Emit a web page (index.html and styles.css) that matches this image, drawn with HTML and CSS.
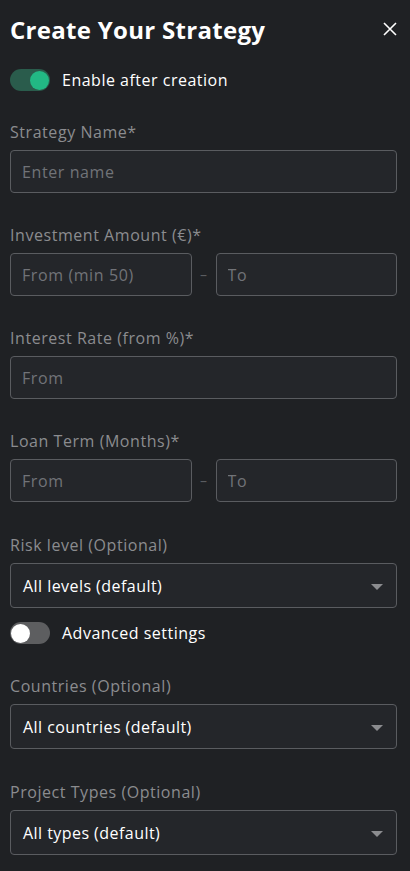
FILE: index.html
```html
<!DOCTYPE html>
<html>
<head>
  <link rel="stylesheet" href="styles.css">
</head>
<body>
  <div class="panel">
    <div class="header">
      <h1 class="title">Create Your Strategy</h1>
      <button class="close" aria-label="Close">
        <svg width="14" height="14" viewBox="0 0 14 14"><path d="M1 1L13 13M13 1L1 13" stroke="#ffffff" stroke-width="1.6" fill="none"/></svg>
      </button>
    </div>

    <label class="switch-row">
      <span class="switch on"><span class="knob"></span></span>
      <span class="switch-text">Enable after creation</span>
    </label>

    <div class="field">
      <div class="label">Strategy Name*</div>
      <input class="input" type="text" placeholder="Enter name">
    </div>

    <div class="field">
      <div class="label">Investment Amount (€)*</div>
      <div class="range">
        <input class="input" type="text" placeholder="From (min 50)">
        <span class="dash">–</span>
        <input class="input" type="text" placeholder="To">
      </div>
    </div>

    <div class="field">
      <div class="label">Interest Rate (from %)*</div>
      <input class="input" type="text" placeholder="From">
    </div>

    <div class="field">
      <div class="label">Loan Term (Months)*</div>
      <div class="range">
        <input class="input" type="text" placeholder="From">
        <span class="dash">–</span>
        <input class="input" type="text" placeholder="To">
      </div>
    </div>

    <div class="field tight">
      <div class="label">Risk level (Optional)</div>
      <div class="select">All levels (default)<span class="caret"></span></div>
    </div>

    <label class="switch-row advanced">
      <span class="switch"><span class="knob"></span></span>
      <span class="switch-text">Advanced settings</span>
    </label>

    <div class="field countries">
      <div class="label">Countries (Optional)</div>
      <div class="select">All countries (default)<span class="caret"></span></div>
    </div>

    <div class="field types">
      <div class="label">Project Types (Optional)</div>
      <div class="select">All types (default)<span class="caret"></span></div>
    </div>
  </div>
</body>
</html>
```

FILE: styles.css
```css
* {
  box-sizing: border-box;
}

body {
  margin: 0;
  background-color: #1f2124;
  font-family: "Open Sans", "Liberation Sans", sans-serif;
  color: #ffffff;
}

.panel {
  width: 397px;
  padding: 12px 0 0 10px;
}

.header {
  display: flex;
  align-items: center;
  justify-content: space-between;
  height: 34px;
}

.title {
  margin: 0;
  font-size: 24px;
  font-weight: 700;
  letter-spacing: 0.3px;
}

.close {
  background: none;
  border: none;
  padding: 0;
  width: 14px;
  height: 14px;
  cursor: pointer;
  display: flex;
}

.switch-row {
  display: flex;
  align-items: center;
  gap: 12px;
  margin-top: 23px;
  height: 22px;
}

.switch {
  position: relative;
  width: 40px;
  height: 22px;
  border-radius: 11px;
  background-color: #5d5e60;
  flex-shrink: 0;
}

.switch .knob {
  position: absolute;
  top: 2px;
  left: 1px;
  width: 19px;
  height: 19px;
  border-radius: 50%;
  background-color: #ffffff;
}

.switch.on {
  background-color: #2a5c4c;
}

.switch.on .knob {
  left: 20px;
  background-color: #22b884;
}

.switch-text {
  font-size: 16px;
  font-weight: 500;
  letter-spacing: 0.5px;
}

.field {
  margin-top: 31px;
}

.field + .field {
  margin-top: 32px;
}

.label {
  font-size: 16px;
  line-height: 20px;
  letter-spacing: 0.55px;
  color: #8b8c8f;
  margin-bottom: 8px;
}

.input {
  display: block;
  width: 100%;
  height: 43px;
  padding: 0 11px;
  background-color: #24262a;
  border: 1px solid #5a5c60;
  border-radius: 4px;
  font-family: inherit;
  font-size: 16px;
  letter-spacing: 0.6px;
  color: #ffffff;
  outline: none;
}

.input::placeholder {
  color: #717378;
}

.range {
  display: flex;
  align-items: center;
}

.range .input {
  flex: 1;
  width: auto;
  min-width: 0;
}

.dash {
  width: 24px;
  text-align: center;
  color: #5a5c60;
  font-size: 14px;
}

.field.tight {
  margin-top: 33px;
}

.select {
  position: relative;
  height: 45px;
  display: flex;
  align-items: center;
  padding: 0 12px;
  background-color: #24262a;
  border: 1px solid #5a5c60;
  border-radius: 4px;
  font-size: 16px;
  font-weight: 500;
  letter-spacing: 0.45px;
  color: #ffffff;
}

.caret {
  position: absolute;
  right: 13px;
  top: 20px;
  width: 0;
  height: 0;
  border-left: 6px solid transparent;
  border-right: 6px solid transparent;
  border-top: 6px solid #8b8c8f;
}

.advanced {
  margin-top: 14px;
}

.field.countries {
  margin-top: 32px;
}

.field.types {
  margin-top: 33px;
}
```
